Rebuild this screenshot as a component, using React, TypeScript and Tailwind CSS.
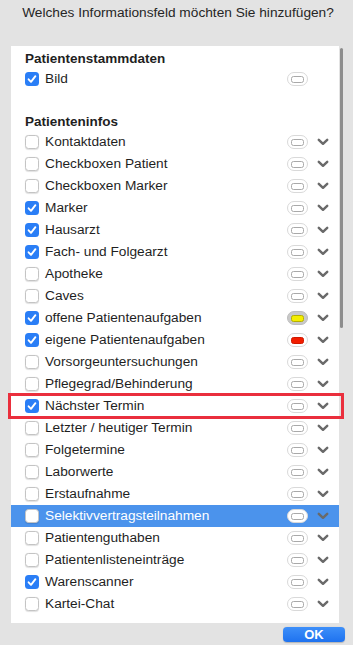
import React from "react";

type Item = { label: string; checked?: boolean; color?: "yellow" | "red"; selected?: boolean };

const items: Item[] = [
  { label: "Kontaktdaten" },
  { label: "Checkboxen Patient" },
  { label: "Checkboxen Marker" },
  { label: "Marker", checked: true },
  { label: "Hausarzt", checked: true },
  { label: "Fach- und Folgearzt", checked: true },
  { label: "Apotheke" },
  { label: "Caves" },
  { label: "offene Patientenaufgaben", checked: true, color: "yellow" },
  { label: "eigene Patientenaufgaben", checked: true, color: "red" },
  { label: "Vorsorgeuntersuchungen" },
  { label: "Pflegegrad/Behinderung" },
  { label: "Nächster Termin", checked: true },
  { label: "Letzter / heutiger Termin" },
  { label: "Folgetermine" },
  { label: "Laborwerte" },
  { label: "Erstaufnahme" },
  { label: "Selektivvertragsteilnahmen", selected: true },
  { label: "Patientenguthaben" },
  { label: "Patientenlisteneinträge" },
  { label: "Warenscanner", checked: true },
  { label: "Kartei-Chat" },
];

function Checkbox({ checked }: { checked?: boolean }) {
  if (checked) {
    return (
      <div className="w-[14px] h-[14px] rounded-[3.5px] bg-[#2a7ef6] flex items-center justify-center shrink-0">
        <svg width="10" height="10" viewBox="0 0 10 10">
          <path d="M1.6 5.3 L4 7.8 L8.4 2.2" fill="none" stroke="white" strokeWidth="1.9" strokeLinecap="round" strokeLinejoin="round" />
        </svg>
      </div>
    );
  }
  return (
    <div className="w-[14px] h-[14px] rounded-[3.5px] bg-white border border-[#c4c4c4] shadow-[0_0.5px_1px_rgba(0,0,0,0.12)] shrink-0" />
  );
}

function Pill({ color }: { color?: "yellow" | "red" }) {
  const outer = color === "yellow" ? "bg-[#c9c9c9] border-[#bdbdbd]" : "bg-white border-[#d9d9d9]";
  const inner =
    color === "yellow"
      ? "bg-[#f4ee00] border-[#b5b000]"
      : color === "red"
      ? "bg-[#f21d00] border-[#d01800]"
      : "bg-white border-[#a9a9a9]";
  return (
    <div className={`w-[21px] h-[14px] rounded-full border ${outer} flex items-center justify-center shrink-0`}>
      <div className={`w-[13px] h-[7px] rounded-[2.5px] border ${inner}`} />
    </div>
  );
}

function Chevron() {
  return (
    <svg width="12" height="8" viewBox="0 0 12 8" className="shrink-0">
      <path d="M1.8 1.8 L6 5.8 L10.2 1.8" fill="none" stroke="#6a6a6a" strokeWidth="2.5" strokeLinecap="round" strokeLinejoin="round" />
    </svg>
  );
}

function Row({ item, noChevron }: { item: Item; noChevron?: boolean }) {
  return (
    <div
      className={`h-[22px] flex items-center pl-[14px] pr-[10px] ${item.selected ? "bg-[#4b93ec] text-white" : "text-[#1f1f1f]"}`}
    >
      <Checkbox checked={item.checked} />
      <span className={`ml-[6px] flex-1 text-[13.7px] leading-[16px] whitespace-nowrap ${item.selected ? "font-medium" : ""}`}>
        {item.label}
      </span>
      <Pill color={item.color} />
      <div className="ml-[9px] w-[12px] flex items-center">{noChevron ? null : <Chevron />}</div>
    </div>
  );
}

export default function App() {
  return (
    <div
      className="relative w-[353px] h-[645px] overflow-hidden bg-[#e3e3e3] flex flex-col"
      style={{ fontFamily: '"Liberation Sans", Arial, sans-serif' }}
    >
      <div className="h-[46px] pt-[5px] pl-[3px] text-center text-[13.7px] leading-[16px] text-[#262626]">
        Welches Informationsfeld möchten Sie hinzufügen?
      </div>
      <div className="ml-[11px] w-[328px] h-[577px] bg-white pt-[4px]">
        <div className="h-[18px] pl-[14px] flex items-center text-[13.5px] font-bold text-[#1f1f1f]">Patientenstammdaten</div>
        <Row item={{ label: "Bild", checked: true }} noChevron />
        <div className="h-[23px]" />
        <div className="h-[18px] pl-[14px] flex items-center text-[13.5px] font-bold text-[#1f1f1f]">Patienteninfos</div>
        {items.map((it) => (
          <Row key={it.label} item={it} />
        ))}
      </div>
      <div className="flex justify-end pr-[8px] pt-[4px]">
        <button className="w-[62px] h-[15px] rounded-[4px] bg-gradient-to-b from-[#3d8ff9] to-[#1e72ef] text-white text-[13px] leading-[15px] font-bold shadow-[0_0.5px_1px_rgba(0,0,0,0.2)]">
          OK
        </button>
      </div>
      <div className="absolute left-[340px] top-[48px] w-[2.5px] h-[280px] rounded-full bg-[#8d8d8d]" />
      <div className="absolute left-[8px] top-[393px] w-[336px] h-[26px] border-[3px] border-[#ea2f3d]" />
    </div>
  );
}
